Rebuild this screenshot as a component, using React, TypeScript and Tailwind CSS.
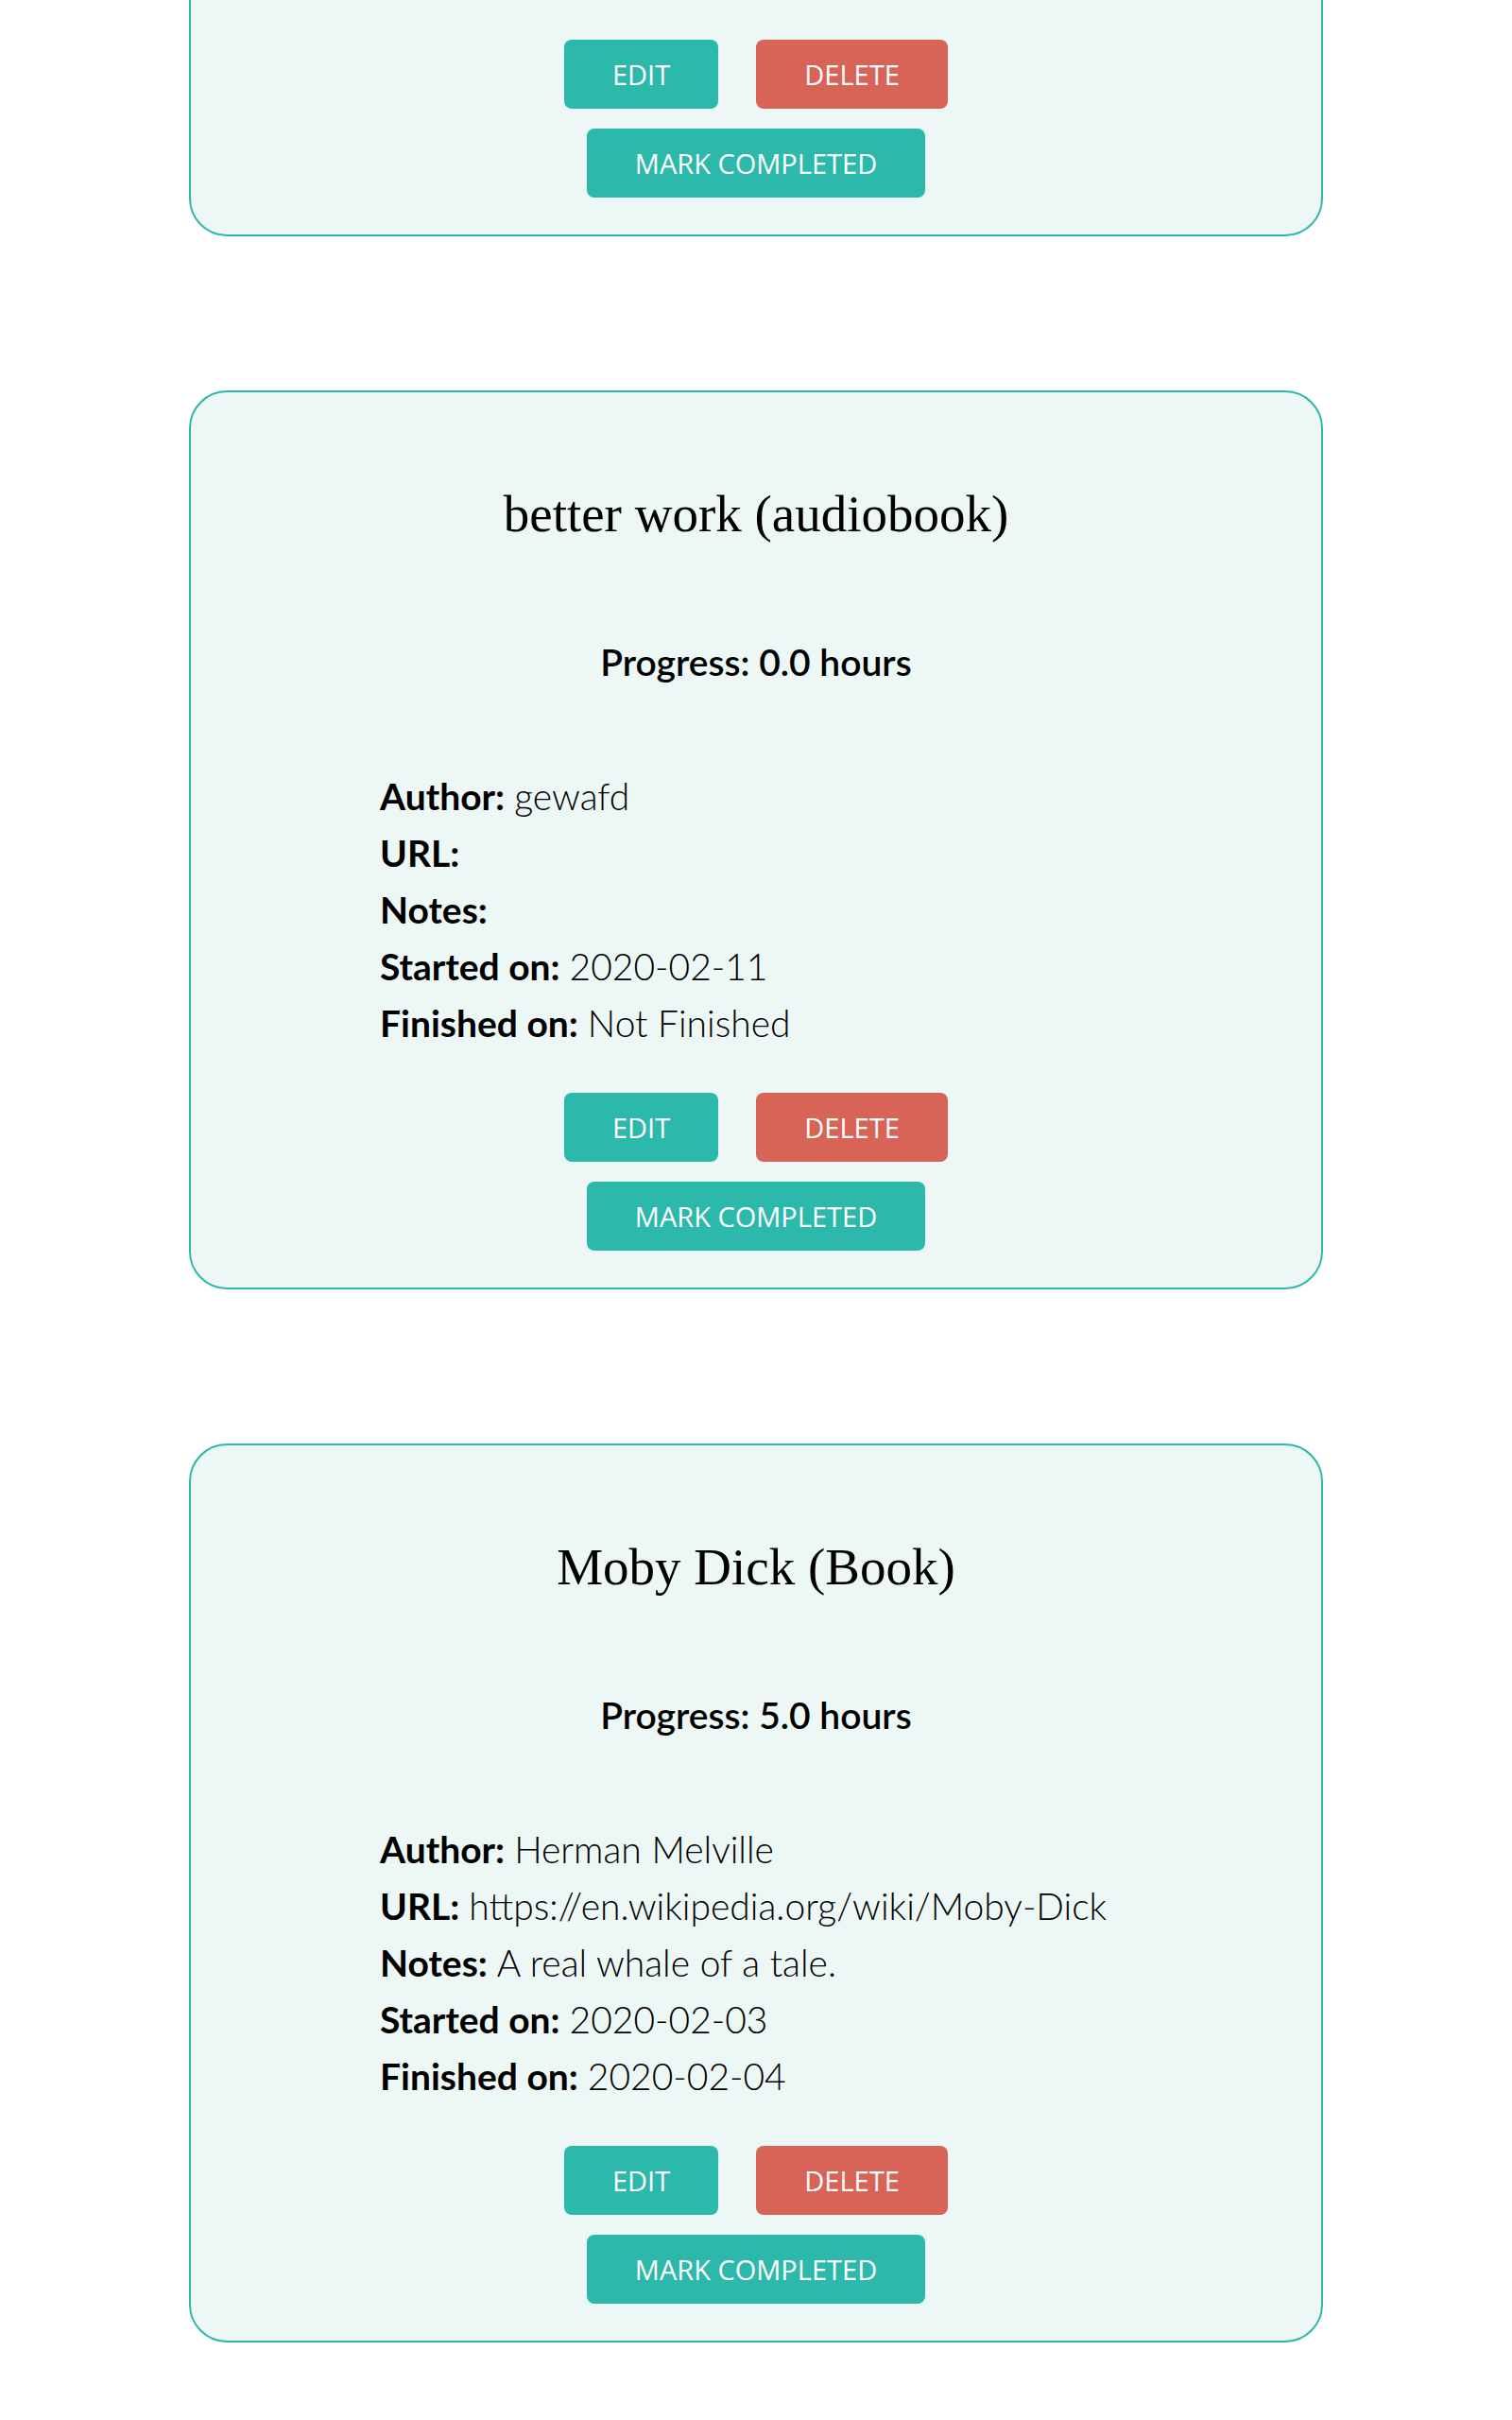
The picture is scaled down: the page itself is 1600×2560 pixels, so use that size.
const books = [
  {
    id: 1,
    title: "better work (audiobook)",
    progress: "0.0 hours",
    author: "gewafd",
    url: "",
    notes: "",
    started: "2020-02-11",
    finished: "Not Finished",
  },
  {
    id: 2,
    title: "Moby Dick (Book)",
    progress: "5.0 hours",
    author: "Herman Melville",
    url: "https://en.wikipedia.org/wiki/Moby-Dick",
    notes: "A real whale of a tale.",
    started: "2020-02-03",
    finished: "2020-02-04",
  },
];

const Field = ({ label, value }: { label: string; value: string }) => (
  <p>
    <span className="font-bold">{label}:</span>{" "}
    <span className="font-light">{value}</span>
  </p>
);

const Actions = () => (
  <div className="flex flex-col items-center gap-[21px] font-['Open_Sans',sans-serif] text-[29px] text-white">
    <div className="flex gap-[40px]">
      <button className="w-[163px] h-[73px] rounded-[8px] bg-[#2cb8aa]">
        EDIT
      </button>
      <button className="w-[203px] h-[73px] rounded-[8px] bg-[#d86357]">
        DELETE
      </button>
    </div>
    <button className="w-[358px] h-[73px] rounded-[8px] bg-[#2cb8aa]">
      MARK COMPLETED
    </button>
  </div>
);

const BookCard = ({ book }: { book: any }) => {
  return (
    <div className="w-[1200px] mx-auto border-2 border-[#2cb8aa] rounded-[40px] bg-[#edf7f5] pt-[97px] pb-[39px]">
      <h2 className="text-center text-[55px] leading-[64px] text-black font-['Liberation_Serif',serif]">
        {book.title}
      </h2>
      <p className="mt-[100px] text-center text-[39px] leading-[48px] font-semibold text-black">
        Progress: {book.progress}
      </p>

      <div className="mt-[88px] pl-[200px] text-[39px] leading-[60px] text-black">
        <Field label="Author" value={book.author} />
        <Field label="URL" value={book.url} />
        <Field label="Notes" value={book.notes} />
        <Field label="Started on" value={book.started} />
        <Field label="Finished on" value={book.finished} />
      </div>

      <div className="mt-[44px]">
        <Actions />
      </div>
    </div>
  );
};

export default function App() {
  return (
    <div className="min-h-screen bg-white font-['Lato',sans-serif] overflow-hidden">
      <div className="-mt-[701px] flex flex-col gap-[163px] pb-[80px]">
        {/* previous card, scrolled mostly out of view */}
        <div className="w-[1200px] mx-auto border-2 border-[#2cb8aa] rounded-[40px] bg-[#edf7f5] pt-[741px] pb-[39px]">
          <Actions />
        </div>
        {books.map((book) => (
          <BookCard key={book.id} book={book} />
        ))}
      </div>
    </div>
  );
}
